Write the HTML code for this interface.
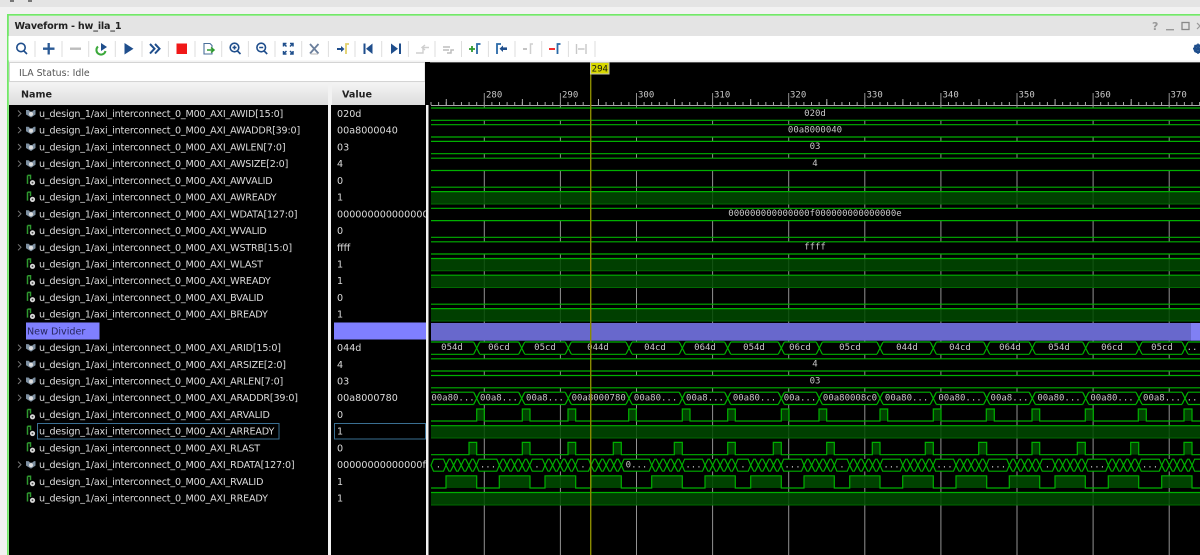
<!DOCTYPE html>
<html><head><meta charset="utf-8"><title>Waveform - hw_ila_1</title>
<style>
html,body{margin:0;padding:0;background:#f2f2f2;width:1200px;height:555px;overflow:hidden}
svg{display:block;position:absolute;left:0;top:0}
.n{font:9.6px "DejaVu Sans",sans-serif;fill:#dcdcdc;letter-spacing:-.18px}
.v{font:9.6px "DejaVu Sans",sans-serif;fill:#dcdcdc}
.m{font:9px "DejaVu Sans Mono",monospace;fill:#c8c8c8;text-anchor:middle}
.l{stroke:#00b000;stroke-width:1.2;fill:none}
.f{fill:#004a00}
.b{fill:none;stroke:#1f4e8c;stroke-width:1.6}
.gr{stroke:#929292;stroke-width:1}
</style></head><body>
<svg width="1200" height="555" viewBox="0 0 1200 555" xmlns="http://www.w3.org/2000/svg">
<defs>
<linearGradient id="hd" x1="0" y1="0" x2="0" y2="1"><stop offset="0" stop-color="#f4f4f4"/><stop offset="1" stop-color="#dcdcdc"/></linearGradient>
<clipPath id="vc"><rect x="331" y="100" width="95" height="450"/></clipPath>
<g id="bus"><path d="M-4.5 -3.5 L-2 -3.5 L-0.3 -2 L1.7 -2 L3.5 -3.5 L5 -3.5 L5 1 L0.5 4 L-4.5 1 Z" fill="#7d8fa0"/><circle cx="0.5" cy="0.5" r="2" fill="#dedede"/></g>
<g id="sig"><path d="M-3.5 -5V3.5M-3.5 -5H-.5V-1" stroke="#2f9a2f" stroke-width="1.5" fill="none"/><circle cx="1.5" cy="2.3" r="2.6" fill="#d8d8d8"/><circle cx="1.5" cy="2.3" r=".9" fill="#444"/></g>
<path id="chev" d="M0 -3 L3 0 L0 3" fill="none" stroke="#7a7a7a" stroke-width="1"/>
<g id="x4"><path class="l" d="M0 0 L3 -6 L4.6 -6 L7.6 0 L10.6 6 L12.2 6 L15.2 0 L18.2 -6 L19.8 -6 L22.8 0 L25.8 6 L27.4 6 L30.4 0"/><path class="l" d="M0 0 L3 6 L4.6 6 L7.6 0 L10.6 -6 L12.2 -6 L15.2 0 L18.2 6 L19.8 6 L22.8 0 L25.8 -6 L27.4 -6 L30.4 0"/></g>
<g id="xb"><rect x="-3" y="-7" width="6" height="14" fill="#000"/><path class="l" d="M-3 -6 L3 6 M-3 6 L3 -6"/></g>
</defs>

<!-- window chrome -->
<rect width="1200" height="7" fill="#e4e4e4"/>
<rect x="10" y="0" width="4" height="2" fill="#777"/><rect x="28" y="0" width="4" height="2" fill="#777"/>
<rect y="7" width="1200" height="548" fill="#f2f2f2"/>
<rect x="8.5" y="16" width="1192" height="20" fill="#e4e4e4"/>
<rect x="7" y="14" width="1193" height="1.7" fill="#72e868"/>
<rect x="7" y="14" width="1.8" height="541" fill="#72e868"/>
<text x="14.5" y="29" style="font:bold 9.6px 'DejaVu Sans',sans-serif;fill:#222;letter-spacing:-.2px">Waveform - hw_ila_1</text>
<text x="1152" y="30" style="font:bold 11px 'DejaVu Sans',sans-serif;fill:#999">?</text>
<rect x="1166" y="29" width="8" height="1.4" fill="#999"/>
<rect x="1182" y="22.5" width="7" height="7" fill="none" stroke="#888" stroke-width="1.3"/>
<path d="M1197 23 L1203 29 M1203 23 L1197 29" stroke="#999" stroke-width="1.2"/>

<!-- toolbar -->
<rect x="8.5" y="36" width="1192" height="24.5" fill="#fff"/>
<path stroke="#dedede" stroke-width="1" d="M35 41V57M62 41V57M88.7 41V57M115.3 41V57M142 41V57M168.4 41V57M195 41V57M221.7 41V57M248.4 41V57M275 41V57M301.7 41V57M328.4 41V57M355 41V57M381.7 41V57M408.4 41V57M435 41V57M461.5 41V57M488.4 41V57M515 41V57M541.7 41V57M568.4 41V57M595 41V57"/>
<circle class="b" cx="21" cy="47.5" r="4.2"/><path class="b" stroke-width="2" d="M24 51 L27 54"/>
<path d="M43 48.7H54.5M48.7 43V54.5" stroke="#2a5a95" stroke-width="2.3"/>
<path d="M70 48.7H81" stroke="#bcbcbc" stroke-width="2.4"/>
<path d="M98 46.5 A4.6 4.6 0 1 0 105.5 51" fill="none" stroke="#3aa83a" stroke-width="2"/><path d="M101 43 L107 47 L101 51Z" fill="#1f4e8c"/>
<path d="M124.5 43 L133.5 48.7 L124.5 54.5Z" fill="#1f4e8c"/>
<path d="M150 44 L154.5 48.7 L150 53.5M155 44 L159.5 48.7 L155 53.5" fill="none" stroke="#1f4e8c" stroke-width="2"/>
<rect x="176.5" y="43.5" width="10.5" height="10.5" fill="#f01818"/>
<path d="M204 43.5H210L212 45.5V54H204Z" fill="#fff" stroke="#4a6f9a" stroke-width="1.1"/><path d="M207 50H213M211 47.5L214 50L211 52.5" fill="none" stroke="#2f9a2f" stroke-width="1.5"/>
<circle class="b" cx="234.5" cy="47.5" r="4.3"/><path class="b" d="M237.5 51L240.5 54M232.5 47.5H236.5M234.5 45.5V49.5" stroke-width="1.4"/>
<circle class="b" cx="261.2" cy="47.5" r="4.3"/><path class="b" d="M264.2 51L267.2 54M259.2 47.5H263.2" stroke-width="1.4"/>
<path d="M283.5 46.5V43.5H286.5M293 46.5V43.5H290M283.5 51V54H286.5M293 51V54H290M284 44L286.5 46.5M292.5 44L290 46.5M284 53.5L286.5 51M292.5 53.5L290 51" fill="none" stroke="#1f4e8c" stroke-width="1.5"/>
<path d="M310 44L318.5 53.5M318.5 44L310 53.5" stroke="#6b7f9c" stroke-width="1.8"/><path d="M310.5 54H318" stroke="#b5b5b5" stroke-width="1"/>
<path d="M337 49H342" stroke="#1f4e8c" stroke-width="2"/><path d="M341 46L344.5 49L341 52Z" fill="#1f4e8c"/><path d="M346 54V44H349" fill="none" stroke="#e2cf6a" stroke-width="1.8"/>
<path d="M364.5 43.5V54" stroke="#1f4e8c" stroke-width="2"/><path d="M372.5 43.5V54L366 48.7Z" fill="#1f4e8c"/>
<path d="M400 43.5V54" stroke="#1f4e8c" stroke-width="2"/><path d="M391 43.5V54L398 48.7Z" fill="#1f4e8c"/>
<path d="M416 53H423V47M423 47.5H429M425 45L422 47.5L425 50" fill="none" stroke="#cfcfcf" stroke-width="1.4"/>
<path d="M443 47H450M443 50H449M447 53H451V50H454" fill="none" stroke="#bdbdbd" stroke-width="1.5"/>
<path d="M469 49H475M472 46V52" stroke="#2f9a2f" stroke-width="1.8"/><path d="M477 54V44H480.5" fill="none" stroke="#2a6aa8" stroke-width="1.8"/>
<path d="M497 54V44H501" fill="none" stroke="#2a6aa8" stroke-width="1.8"/><path d="M502 48.7H507" stroke="#1f4e8c" stroke-width="2.6"/><path d="M503 45.5L499.5 48.7L503 52Z" fill="#1f4e8c"/>
<path d="M523 49H527" stroke="#c4c4c4" stroke-width="2"/><path d="M530.5 54V44H533" fill="none" stroke="#cfcfcf" stroke-width="1.5"/>
<path d="M549 49H555" stroke="#f01818" stroke-width="1.8"/><path d="M557.5 54V44H560.5" fill="none" stroke="#2a6aa8" stroke-width="1.8"/>
<path d="M576.5 44V54M586 44V54M578 49H584.5" fill="none" stroke="#c8c8c8" stroke-width="1.4"/>
<circle cx="1198" cy="48.7" r="3.4" fill="none" stroke="#1f4e8c" stroke-width="2.4"/><path d="M1198 43.5V54M1193 48.7H1203M1194.5 45L1201.5 52M1194.5 52L1201.5 45" stroke="#1f4e8c" stroke-width="1.4"/>

<!-- status -->
<rect x="9.5" y="62.5" width="415.5" height="19" fill="#fff" stroke="#d4d4d4"/>
<text x="19" y="76" style="font:9.4px 'DejaVu Sans',sans-serif;fill:#555">ILA Status: Idle</text>

<!-- headers -->
<rect x="9" y="83" width="319" height="22" fill="url(#hd)"/>
<rect x="332" y="83" width="93" height="22" fill="url(#hd)"/>
<text x="21" y="97.5" style="font:bold 9.6px 'DejaVu Sans',sans-serif;fill:#222">Name</text>
<text x="342" y="97.5" style="font:bold 9.6px 'DejaVu Sans',sans-serif;fill:#222">Value</text>

<!-- columns -->
<rect x="9" y="105" width="319" height="450" fill="#000"/>
<rect x="331" y="105" width="95" height="450" fill="#000"/>
<rect x="425" y="62" width="5" height="43" fill="#000"/>
<rect x="428.5" y="62" width="771.5" height="493" fill="#000"/>
<rect x="430" y="62" width="770" height="1" fill="#555"/>

<!-- name icons -->
<use href="#chev" x="18" y="113.5"/><use href="#bus" x="30.5" y="113.5"/>
<use href="#chev" x="18" y="130.2"/><use href="#bus" x="30.5" y="130.2"/>
<use href="#chev" x="18" y="147"/><use href="#bus" x="30.5" y="147"/>
<use href="#chev" x="18" y="163.7"/><use href="#bus" x="30.5" y="163.7"/>
<use href="#sig" x="31" y="180.4"/>
<use href="#sig" x="31" y="197.1"/>
<use href="#chev" x="18" y="213.8"/><use href="#bus" x="30.5" y="213.8"/>
<use href="#sig" x="31" y="230.5"/>
<use href="#chev" x="18" y="247.3"/><use href="#bus" x="30.5" y="247.3"/>
<use href="#sig" x="31" y="264"/>
<use href="#sig" x="31" y="280.7"/>
<use href="#sig" x="31" y="297.4"/>
<use href="#sig" x="31" y="314.1"/>
<use href="#chev" x="18" y="347.6"/><use href="#bus" x="30.5" y="347.6"/>
<use href="#chev" x="18" y="364.3"/><use href="#bus" x="30.5" y="364.3"/>
<use href="#chev" x="18" y="381"/><use href="#bus" x="30.5" y="381"/>
<use href="#chev" x="18" y="397.7"/><use href="#bus" x="30.5" y="397.7"/>
<use href="#sig" x="31" y="414.5"/>
<use href="#sig" x="31" y="431.2"/>
<use href="#sig" x="31" y="447.9"/>
<use href="#chev" x="18" y="464.6"/><use href="#bus" x="30.5" y="464.6"/>
<use href="#sig" x="31" y="481.3"/>
<use href="#sig" x="31" y="498"/>

<!-- names -->
<rect x="26" y="322.5" width="73.5" height="17" fill="#7f7fff"/>
<text x="27" y="334.5" style="font:9.6px 'DejaVu Sans',sans-serif;fill:#26265e">New Divider</text>
<rect x="37.5" y="423.5" width="241.5" height="15.5" fill="none" stroke="#3a6f92"/>
<text class="n" x="39" y="117">u_design_1/axi_interconnect_0_M00_AXI_AWID[15:0]</text>
<text class="n" x="39" y="133.7">u_design_1/axi_interconnect_0_M00_AXI_AWADDR[39:0]</text>
<text class="n" x="39" y="150.5">u_design_1/axi_interconnect_0_M00_AXI_AWLEN[7:0]</text>
<text class="n" x="39" y="167.2">u_design_1/axi_interconnect_0_M00_AXI_AWSIZE[2:0]</text>
<text class="n" x="39" y="183.9">u_design_1/axi_interconnect_0_M00_AXI_AWVALID</text>
<text class="n" x="39" y="200.6">u_design_1/axi_interconnect_0_M00_AXI_AWREADY</text>
<text class="n" x="39" y="217.3">u_design_1/axi_interconnect_0_M00_AXI_WDATA[127:0]</text>
<text class="n" x="39" y="234">u_design_1/axi_interconnect_0_M00_AXI_WVALID</text>
<text class="n" x="39" y="250.8">u_design_1/axi_interconnect_0_M00_AXI_WSTRB[15:0]</text>
<text class="n" x="39" y="267.5">u_design_1/axi_interconnect_0_M00_AXI_WLAST</text>
<text class="n" x="39" y="284.2">u_design_1/axi_interconnect_0_M00_AXI_WREADY</text>
<text class="n" x="39" y="300.9">u_design_1/axi_interconnect_0_M00_AXI_BVALID</text>
<text class="n" x="39" y="317.6">u_design_1/axi_interconnect_0_M00_AXI_BREADY</text>
<text class="n" x="39" y="351.1">u_design_1/axi_interconnect_0_M00_AXI_ARID[15:0]</text>
<text class="n" x="39" y="367.8">u_design_1/axi_interconnect_0_M00_AXI_ARSIZE[2:0]</text>
<text class="n" x="39" y="384.5">u_design_1/axi_interconnect_0_M00_AXI_ARLEN[7:0]</text>
<text class="n" x="39" y="401.2">u_design_1/axi_interconnect_0_M00_AXI_ARADDR[39:0]</text>
<text class="n" x="39" y="418">u_design_1/axi_interconnect_0_M00_AXI_ARVALID</text>
<text class="n" x="39" y="434.7">u_design_1/axi_interconnect_0_M00_AXI_ARREADY</text>
<text class="n" x="39" y="451.4">u_design_1/axi_interconnect_0_M00_AXI_RLAST</text>
<text class="n" x="39" y="468.1">u_design_1/axi_interconnect_0_M00_AXI_RDATA[127:0]</text>
<text class="n" x="39" y="484.8">u_design_1/axi_interconnect_0_M00_AXI_RVALID</text>
<text class="n" x="39" y="501.5">u_design_1/axi_interconnect_0_M00_AXI_RREADY</text>

<!-- values -->
<rect x="334" y="322.5" width="92" height="17" fill="#7f7fff"/>
<rect x="334.5" y="423.5" width="91" height="15.5" fill="none" stroke="#3a6f92"/>
<g clip-path="url(#vc)">
<text class="v" x="337" y="117">020d</text>
<text class="v" x="337" y="133.7">00a8000040</text>
<text class="v" x="337" y="150.5">03</text>
<text class="v" x="337" y="167.2">4</text>
<text class="v" x="337" y="183.9">0</text>
<text class="v" x="337" y="200.6">1</text>
<text class="v" x="337" y="217.3">00000000000000000000</text>
<text class="v" x="337" y="234">0</text>
<text class="v" x="337" y="250.8">ffff</text>
<text class="v" x="337" y="267.5">1</text>
<text class="v" x="337" y="284.2">1</text>
<text class="v" x="337" y="300.9">0</text>
<text class="v" x="337" y="317.6">1</text>
<text class="v" x="337" y="351.1">044d</text>
<text class="v" x="337" y="367.8">4</text>
<text class="v" x="337" y="384.5">03</text>
<text class="v" x="337" y="401.2">00a8000780</text>
<text class="v" x="337" y="418">0</text>
<text class="v" x="337" y="434.7">1</text>
<text class="v" x="337" y="451.4">0</text>
<text class="v" x="337" y="468.1">00000000000000f000</text>
<text class="v" x="337" y="484.8">1</text>
<text class="v" x="337" y="501.5">1</text>
</g>

<!-- ruler -->
<line x1="431" y1="105.5" x2="1200" y2="105.5" stroke="#a8a8a8" stroke-width="1"/>
<line x1="430.5" y1="103.5" x2="1200" y2="103.5" stroke="#a8a8a8" stroke-width="3" stroke-dasharray="1 6.61"/>
<line x1="445.8" y1="102" x2="1200" y2="102" stroke="#a8a8a8" stroke-width="6" stroke-dasharray="1 75.1"/>
<text class="m" x="486" y="97.5" style="text-anchor:start">280</text><text class="m" x="562" y="97.5" style="text-anchor:start">290</text><text class="m" x="638" y="97.5" style="text-anchor:start">300</text><text class="m" x="714" y="97.5" style="text-anchor:start">310</text><text class="m" x="790" y="97.5" style="text-anchor:start">320</text><text class="m" x="866.5" y="97.5" style="text-anchor:start">330</text><text class="m" x="942.5" y="97.5" style="text-anchor:start">340</text><text class="m" x="1018.5" y="97.5" style="text-anchor:start">350</text><text class="m" x="1094.5" y="97.5" style="text-anchor:start">360</text><text class="m" x="1170.5" y="97.5" style="text-anchor:start">370</text>

<!-- grid -->
<g class="gr">
<line x1="484.3" y1="93" x2="484.3" y2="555"/><line x1="560.4" y1="93" x2="560.4" y2="555"/><line x1="636.5" y1="93" x2="636.5" y2="555"/><line x1="712.6" y1="93" x2="712.6" y2="555"/><line x1="788.7" y1="93" x2="788.7" y2="555"/><line x1="864.8" y1="93" x2="864.8" y2="555"/><line x1="940.9" y1="93" x2="940.9" y2="555"/><line x1="1017" y1="93" x2="1017" y2="555"/><line x1="1093.1" y1="93" x2="1093.1" y2="555"/><line x1="1169.2" y1="93" x2="1169.2" y2="555"/>
</g>

<!-- bus rows: black backgrounds hide grid -->
<g fill="#000">
<rect x="431" y="108" width="769" height="12.3"/><rect x="431" y="124.7" width="769" height="12.3"/><rect x="431" y="141.4" width="769" height="12.3"/><rect x="431" y="158.2" width="769" height="12.3"/><rect x="431" y="208.3" width="769" height="12.3"/><rect x="431" y="241.8" width="769" height="12.3"/><rect x="431" y="342" width="769" height="12.3"/><rect x="431" y="358.8" width="769" height="12.3"/><rect x="431" y="375.5" width="769" height="12.3"/><rect x="431" y="392.2" width="769" height="12.3"/><rect x="431" y="459" width="769" height="12.4"/>
</g>

<!-- high fills -->
<g class="f" style="opacity:.85">
<rect x="431" y="191.6" width="769" height="12.4"/><rect x="431" y="258.5" width="769" height="12.3"/><rect x="431" y="275.2" width="769" height="12.3"/><rect x="431" y="308.6" width="769" height="12.4"/><rect x="431" y="425.7" width="769" height="12.3"/><rect x="431" y="492.5" width="769" height="12.5"/>
</g>

<!-- row lines -->
<path class="l" d="M431 108H1200M431 120.3H1200M431 124.7H1200M431 137H1200M431 141.4H1200M431 153.7H1200M431 158.2H1200M431 170.5H1200M431 187.2H1200M431 191.6H1200M431 208.3H1200M431 220.6H1200M431 237.3H1200M431 241.8H1200M431 254H1200M431 258.5H1200M431 275.2H1200M431 304.2H1200M431 308.6H1200M431 342H1200M431 354.3H1200M431 358.8H1200M431 371H1200M431 375.5H1200M431 387.8H1200M431 392.2H1200M431 404.5H1200M431 425.7H1200M431 492.5H1200"/>
<path d="M431 204H1200M431 270.8H1200M431 287.5H1200M431 321H1200M431 438H1200M431 505H1200" stroke="#006a00" stroke-width="1"/>

<!-- divider -->
<rect x="431" y="323" width="760" height="17.7" fill="#6868cc"/>
<rect x="1191" y="323" width="9" height="17.7" fill="#8080f4"/>

<!-- bus labels -->
<text class="m" x="815" y="116">020d</text>
<text class="m" x="815" y="132.3">00a8000040</text>
<text class="m" x="815" y="149">03</text>
<text class="m" x="815" y="166">4</text>
<text class="m" x="815" y="216">000000000000000f000000000000000e</text>
<text class="m" x="815" y="249.3">ffff</text>
<text class="m" x="815" y="366.6">4</text>
<text class="m" x="815" y="383.3">03</text>

<!-- ARID / ARADDR crosses -->
<g>
<use href="#xb" x="476.7" y="348.1"/><use href="#xb" x="521.7" y="348.1"/><use href="#xb" x="568.3" y="348.1"/><use href="#xb" x="629" y="348.1"/><use href="#xb" x="682.3" y="348.1"/><use href="#xb" x="727.7" y="348.1"/><use href="#xb" x="781.3" y="348.1"/><use href="#xb" x="819.3" y="348.1"/><use href="#xb" x="880" y="348.1"/><use href="#xb" x="933.3" y="348.1"/><use href="#xb" x="986.7" y="348.1"/><use href="#xb" x="1032.3" y="348.1"/><use href="#xb" x="1085.7" y="348.1"/><use href="#xb" x="1139" y="348.1"/><use href="#xb" x="1185" y="348.1"/>
<use href="#xb" x="476.7" y="398.3"/><use href="#xb" x="521.7" y="398.3"/><use href="#xb" x="568.3" y="398.3"/><use href="#xb" x="629" y="398.3"/><use href="#xb" x="682.3" y="398.3"/><use href="#xb" x="727.7" y="398.3"/><use href="#xb" x="781.3" y="398.3"/><use href="#xb" x="819.3" y="398.3"/><use href="#xb" x="880" y="398.3"/><use href="#xb" x="933.3" y="398.3"/><use href="#xb" x="986.7" y="398.3"/><use href="#xb" x="1032.3" y="398.3"/><use href="#xb" x="1085.7" y="398.3"/><use href="#xb" x="1139" y="398.3"/><use href="#xb" x="1185" y="398.3"/>
</g>
<text class="m" x="452" y="350">054d</text><text class="m" x="499" y="350">06cd</text><text class="m" x="545" y="350">05cd</text><text class="m" x="598" y="350">044d</text><text class="m" x="655" y="350">04cd</text><text class="m" x="705" y="350">064d</text><text class="m" x="754" y="350">054d</text><text class="m" x="800" y="350">06cd</text><text class="m" x="850" y="350">05cd</text><text class="m" x="907" y="350">044d</text><text class="m" x="960" y="350">04cd</text><text class="m" x="1010" y="350">064d</text><text class="m" x="1059" y="350">054d</text><text class="m" x="1112" y="350">06cd</text><text class="m" x="1162" y="350">05cd</text><text class="m" x="1192" y="350">..</text>
<text class="m" x="453" y="400.3">00a80...</text><text class="m" x="499" y="400.3">00a8...</text><text class="m" x="545" y="400.3">00a8...</text><text class="m" x="598.7" y="400.3">00a8000780</text><text class="m" x="655.6" y="400.3">00a80...</text><text class="m" x="705" y="400.3">00a8...</text><text class="m" x="754.5" y="400.3">00a80...</text><text class="m" x="800" y="400.3">00a...</text><text class="m" x="850" y="400.3">00a80008c0</text><text class="m" x="906.6" y="400.3">00a80...</text><text class="m" x="960" y="400.3">00a80...</text><text class="m" x="1009.5" y="400.3">00a8...</text><text class="m" x="1059" y="400.3">00a80...</text><text class="m" x="1112" y="400.3">00a80...</text><text class="m" x="1162" y="400.3">00a8...</text><text class="m" x="1192" y="400.3">..</text>

<!-- ARVALID -->
<g class="f" style="opacity:.9"><rect x="476.7" y="409" width="7.6" height="12"/><rect x="522.3" y="409" width="7.7" height="12"/><rect x="568" y="409" width="7.7" height="12"/><rect x="628.7" y="409" width="7.6" height="12"/><rect x="682.3" y="409" width="7.7" height="12"/><rect x="727.7" y="409" width="7.6" height="12"/><rect x="781.3" y="409" width="7.7" height="12"/><rect x="819" y="409" width="7.7" height="12"/><rect x="880" y="409" width="7.7" height="12"/><rect x="933.3" y="409" width="7.7" height="12"/><rect x="986.3" y="409" width="8" height="12"/><rect x="1032" y="409" width="7.7" height="12"/><rect x="1085.3" y="409" width="8" height="12"/><rect x="1138.3" y="409" width="8" height="12"/><rect x="1184" y="409" width="8" height="12"/></g>
<path class="l" d="M431 421H476.7V409H484.3V421H522.3V409H530V421H568V409H575.7V421H628.7V409H636.3V421H682.3V409H690V421H727.7V409H735.3V421H781.3V409H789V421H819V409H826.7V421H880V409H887.7V421H933.3V409H941V421H986.3V409H994.3V421H1032V409H1039.7V421H1085.3V409H1093.3V421H1138.3V409H1146.3V421H1184V409H1192V421H1200"/>

<!-- RLAST -->
<g class="f" style="opacity:.9"><rect x="469" y="442.4" width="7.7" height="12.3"/><rect x="522.3" y="442.4" width="7.7" height="12.3"/><rect x="568" y="442.4" width="7.7" height="12.3"/><rect x="613.3" y="442.4" width="8" height="12.3"/><rect x="674.3" y="442.4" width="8" height="12.3"/><rect x="727.7" y="442.4" width="7.6" height="12.3"/><rect x="773.3" y="442.4" width="8" height="12.3"/><rect x="826.7" y="442.4" width="7.6" height="12.3"/><rect x="872.3" y="442.4" width="7.7" height="12.3"/><rect x="925.3" y="442.4" width="8" height="12.3"/><rect x="978.7" y="442.4" width="8" height="12.3"/><rect x="1032" y="442.4" width="7.7" height="12.3"/><rect x="1077.3" y="442.4" width="8" height="12.3"/><rect x="1130.7" y="442.4" width="8" height="12.3"/><rect x="1184" y="442.4" width="8" height="12.3"/></g>
<path class="l" d="M431 454.7H469V442.4H476.7V454.7H522.3V442.4H530V454.7H568V442.4H575.7V454.7H613.3V442.4H621.3V454.7H674.3V442.4H682.3V454.7H727.7V442.4H735.3V454.7H773.3V442.4H781.3V454.7H826.7V442.4H834.3V454.7H872.3V442.4H880V454.7H925.3V442.4H933.3V454.7H978.7V442.4H986.7V454.7H1032V442.4H1039.7V454.7H1077.3V442.4H1085.3V454.7H1130.7V442.4H1138.7V454.7H1184V442.4H1192V454.7H1200"/>

<!-- RDATA -->
<use href="#x4" x="446" y="465.2"/><use href="#x4" x="499.3" y="465.2"/><use href="#x4" x="545" y="465.2"/><use href="#x4" x="591" y="465.2"/><use href="#x4" x="651.7" y="465.2"/><use href="#x4" x="705" y="465.2"/><use href="#x4" x="750.7" y="465.2"/><use href="#x4" x="804" y="465.2"/><use href="#x4" x="849.7" y="465.2"/><use href="#x4" x="902.7" y="465.2"/><use href="#x4" x="956" y="465.2"/><use href="#x4" x="1009.3" y="465.2"/><use href="#x4" x="1055" y="465.2"/><use href="#x4" x="1108.3" y="465.2"/><use href="#x4" x="1161.7" y="465.2"/>
<path class="l" style="fill:#000" d="M431 465.2L433.5 459.2H443.5L446 465.2L443.5 471.2H433.5ZM476.4 465.2L478.9 459.2H496.8L499.3 465.2L496.8 471.2H478.9ZM529.7 465.2L532.2 459.2H542.5L545 465.2L542.5 471.2H532.2ZM575.4 465.2L577.9 459.2H588.5L591 465.2L588.5 471.2H577.9ZM621.4 465.2L623.9 459.2H649.2L651.7 465.2L649.2 471.2H623.9ZM682.1 465.2L684.6 459.2H702.5L705 465.2L702.5 471.2H684.6ZM735.4 465.2L737.9 459.2H748.2L750.7 465.2L748.2 471.2H737.9ZM781.1 465.2L783.6 459.2H801.5L804 465.2L801.5 471.2H783.6ZM834.4 465.2L836.9 459.2H847.2L849.7 465.2L847.2 471.2H836.9ZM880.1 465.2L882.6 459.2H900.2L902.7 465.2L900.2 471.2H882.6ZM933.1 465.2L935.6 459.2H953.5L956 465.2L953.5 471.2H935.6ZM986.4 465.2L988.9 459.2H1006.8L1009.3 465.2L1006.8 471.2H988.9ZM1039.7 465.2L1042.2 459.2H1052.5L1055 465.2L1052.5 471.2H1042.2ZM1085.4 465.2L1087.9 459.2H1105.8L1108.3 465.2L1105.8 471.2H1087.9ZM1138.7 465.2L1141.2 459.2H1159.2L1161.7 465.2L1159.2 471.2H1141.2ZM1192.1 465.2L1194.6 459.2H1200M1200 471.2H1194.6L1192.1 465.2"/>
<g class="m"><text x="438.5" y="467.5">.</text><text x="488" y="467.5">...</text><text x="537" y="467.5">.</text><text x="583" y="467.5">.</text><text x="636.5" y="467.5">0...</text><text x="693.5" y="467.5">...</text><text x="743" y="467.5">.</text><text x="792.5" y="467.5">...</text><text x="842" y="467.5">.</text><text x="891.5" y="467.5">...</text><text x="944.5" y="467.5">...</text><text x="998" y="467.5">...</text><text x="1047.5" y="467.5">.</text><text x="1097" y="467.5">...</text><text x="1150" y="467.5">...</text></g>

<!-- RVALID -->
<g class="f" style="opacity:.9"><rect x="446" y="475.8" width="30.7" height="12.2"/><rect x="499.3" y="475.8" width="30.7" height="12.2"/><rect x="545" y="475.8" width="30.7" height="12.2"/><rect x="591" y="475.8" width="30.3" height="12.2"/><rect x="651.7" y="475.8" width="30.6" height="12.2"/><rect x="705" y="475.8" width="30.3" height="12.2"/><rect x="750.7" y="475.8" width="30.6" height="12.2"/><rect x="804" y="475.8" width="30.3" height="12.2"/><rect x="849.7" y="475.8" width="30.3" height="12.2"/><rect x="902.7" y="475.8" width="30.6" height="12.2"/><rect x="956" y="475.8" width="30.7" height="12.2"/><rect x="1009.3" y="475.8" width="30.4" height="12.2"/><rect x="1055" y="475.8" width="30.3" height="12.2"/><rect x="1108.3" y="475.8" width="30.4" height="12.2"/><rect x="1161.7" y="475.8" width="30.3" height="12.2"/></g>
<path class="l" d="M431 488H446V475.8H476.7V488H499.3V475.8H530V488H545V475.8H575.7V488H591V475.8H621.3V488H651.7V475.8H682.3V488H705V475.8H735.3V488H750.7V475.8H781.3V488H804V475.8H834.3V488H849.7V475.8H880V488H902.7V475.8H933.3V488H956V475.8H986.7V488H1009.3V475.8H1039.7V488H1055V475.8H1085.3V488H1108.3V475.8H1138.7V488H1161.7V475.8H1192V488H1200"/>

<!-- cursor -->
<rect x="590" y="74" width="1.4" height="481" fill="#8a8a00"/>
<rect x="590.5" y="62.5" width="18.5" height="11.5" fill="#d8d800" stroke="#c8c8b0"/>
<text x="599.8" y="71.5" style="font:9px 'DejaVu Sans Mono',monospace;fill:#111;text-anchor:middle">294</text>
</svg>
</body></html>
